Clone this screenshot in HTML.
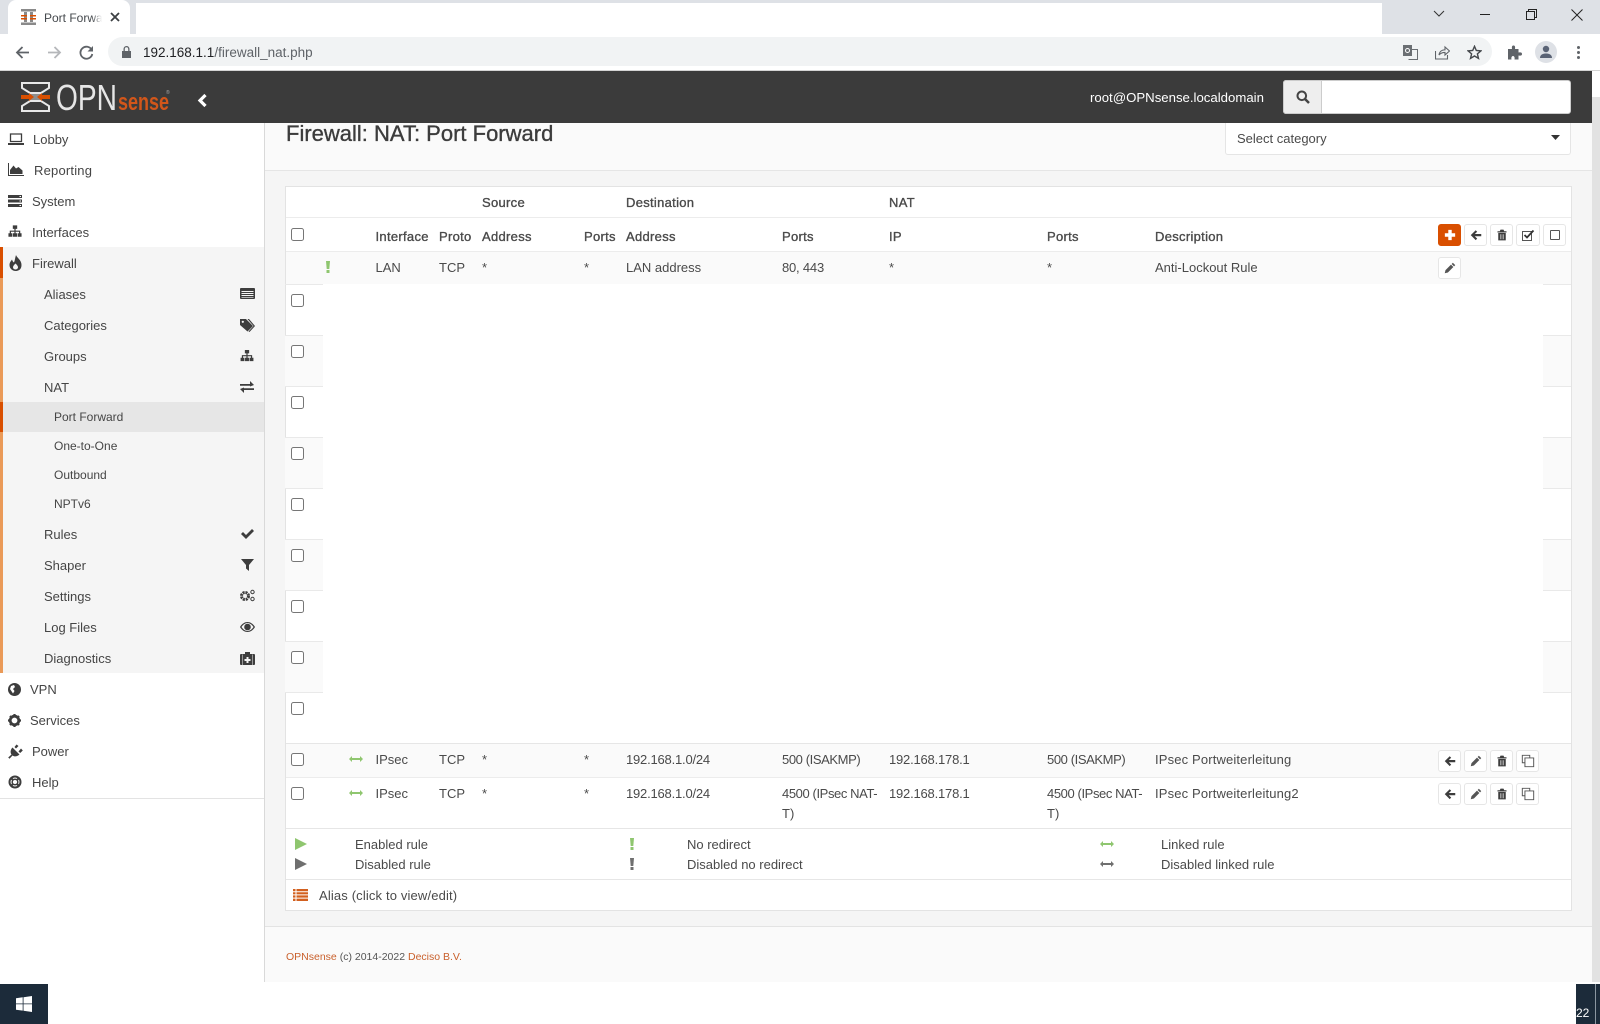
<!DOCTYPE html>
<html><head><meta charset="utf-8"><title>Port Forward</title>
<style>
html,body{margin:0;padding:0;width:1600px;height:1024px;overflow:hidden;background:#fff;font-family:"Liberation Sans",sans-serif;color:#4a4a4a;font-size:13px}
div,span,svg{position:absolute;box-sizing:border-box}
.t{white-space:nowrap;line-height:16px;height:16px;margin-top:1px}
.t span{position:static}
.z{margin-top:0}
.b{-webkit-text-stroke:.35px #4a4a4a;color:#4a4a4a;letter-spacing:.3px}
.s{color:#454545}
.n{letter-spacing:-.4px}
.m{letter-spacing:-.2px}
.d{letter-spacing:.15px}
.cb{width:13px;height:13px;border:1px solid #767676;border-radius:2.5px;background:#fff;left:291px}
.lc{left:285px;width:38px;height:51px;border-top:1px solid #e9e9e9}
.rc{left:1543px;width:28px;height:51px;border-top:1px solid #e9e9e9}
.g{background:#fafafa}
.btn{width:23px;height:22px;border:1px solid #e6e6e6;border-radius:3px;background:#fff}
.btn svg{left:5px;top:4px;width:12px;height:12px;fill:#3d3d3d}
.btn svg.w{left:4px;top:3px;width:14px;height:14px}
.ic{fill:#3d3d3d}
.bar{left:0;width:3px}
</style></head><body>
<svg width="0" height="0" style="display:none"><defs>
<symbol id="arr" viewBox="0 0 16 16"><path d="M7.600 1.600 9.600 3.600 6.400 6.700H15V9.700H6.400L9.600 12.800 7.600 14.800 1 8.200Z"/></symbol>
<symbol id="pen" viewBox="0 0 16 16"><path fill="#555" d="M11.800 1 15 4.200 13.400 5.800 10.200 2.600ZM9.300 3.500 12.500 6.700 5.200 14 1 15 2 10.800Z"/></symbol>
<symbol id="tr" viewBox="0 0 16 16"><path d="M6 .8H10L11 3H14V4.600H2V3H5ZM3 5.400H13V15.200H3Z"/><path fill="#aaa" d="M5.400 7H6.600V13.600H5.400ZM7.400 7H8.600V13.600H7.400ZM9.400 7H10.600V13.600H9.400Z"/></symbol>
<symbol id="cln" viewBox="0 0 16 16"><path fill="none" stroke="#555" stroke-width="1.100" d="M10 4V1.500H1.500V10H4M4.500 4.500H14.500V14.500H4.500Z"/></symbol>
<symbol id="site" viewBox="0 0 16 14"><path d="M5.500 0H10.500V4H8.700V6H14V9H15.500V13H11V9H12.600V7.300H8.700V9H10.300V13H5.700V9H7.300V7.300H3.400V9H5V13H.5V9H2V6H7.300V4H5.500Z"/></symbol>
<symbol id="link" viewBox="0 0 14 8"><path d="M0 4 3 1V3H11V1L14 4 11 7V5H3V7Z"/></symbol>
</defs></svg>

<!-- browser chrome -->
<div style="left:0;top:0;width:1600px;height:34px;background:#dee1e6"></div>
<div style="left:136px;top:3px;width:1246px;height:31px;background:#fff"></div>
<div style="left:8px;top:0;width:122px;height:34px;background:#fff;border-radius:8px 8px 0 0"></div>
<svg style="left:21px;top:9px" width="15" height="16" viewBox="0 0 15 16"><path fill="#8a8a8a" d="M0 0H15V2.500H0ZM0 13.500H15V16H0ZM3 3H6V13H3ZM9 3H12V13H9Z"/><path fill="#d94f00" d="M0 6H6V7.500H0ZM9 6H15V7.500H9ZM0 9H6V10.500H0ZM9 9H15V10.500H9Z"/></svg>
<div class="t" style="left:44px;top:9px;font-size:12px;color:#45494d;width:58px;overflow:hidden">Port Forwa</div>
<div style="left:92px;top:6px;width:10px;height:24px;background:linear-gradient(90deg,rgba(255,255,255,0),#fff)"></div>
<svg style="left:110px;top:12px" width="10" height="10" viewBox="0 0 10 10"><path stroke="#3c4043" stroke-width="1.800" d="M1 1 9 9M9 1 1 9"/></svg>
<svg style="left:1432px;top:9px" width="14" height="10" viewBox="0 0 14 10"><path fill="none" stroke="#333" d="M2 2 7 7 12 2"/></svg>
<div style="left:1480px;top:14px;width:10px;height:1px;background:#222"></div>
<svg style="left:1526px;top:9px" width="11" height="11" viewBox="0 0 11 11"><path fill="none" stroke="#222" d="M.5 2.500H8.500V10.500H.5ZM2.500 2.500V.5H10.500V8.500H8.500"/></svg>
<svg style="left:1571px;top:9px" width="12" height="12" viewBox="0 0 12 12"><path stroke="#222" d="M.5.5 11.500 11.500M11.500.5.5 11.500"/></svg>

<div style="left:0;top:34px;width:1600px;height:37px;background:#fff;border-bottom:1px solid #d4d4d4"></div>
<svg style="left:15px;top:45px" width="15" height="15" viewBox="0 0 15 15"><path fill="none" stroke="#5f6368" stroke-width="1.800" d="M14 7.500H2M7.500 2 2 7.500 7.500 13"/></svg>
<svg style="left:47px;top:45px" width="15" height="15" viewBox="0 0 15 15"><path fill="none" stroke="#b5b7ba" stroke-width="1.800" d="M1 7.500H13M7.500 2 13 7.500 7.500 13"/></svg>
<svg style="left:79px;top:45px" width="15" height="15" viewBox="0 0 15 15"><path fill="none" stroke="#5f6368" stroke-width="1.800" d="M12.800 5A6 6 0 1 0 13.300 9"/><path fill="#5f6368" d="M14 1V6.500H8.500Z"/></svg>
<div style="left:108px;top:37px;width:1384px;height:29px;background:#f1f3f4;border-radius:15px"></div>
<svg style="left:122px;top:46px" width="9" height="12" viewBox="0 0 9 12"><path fill="#5f6368" d="M0 5H9V12H0ZM1.500 5V3A3 3 0 0 1 7.500 3V5H6.200V3A1.700 1.700 0 0 0 2.800 3V5Z"/></svg>
<div class="t" style="left:143px;top:44px;font-size:13.500px;color:#5f6368"><span style="color:#202124">192.168.1.1</span>/firewall_nat.php</div>
<svg style="left:1403px;top:45px" width="15" height="15" viewBox="0 0 15 15"><path fill="#6b6f73" d="M0 0H9V11H0Z"/><path fill="none" stroke="#6b6f73" d="M6 4.500H14.500V14.500H5.500"/><circle cx="4.500" cy="5.500" r="2" fill="none" stroke="#fff"/></svg>
<svg style="left:1435px;top:45px" width="15" height="15" viewBox="0 0 15 15"><path fill="none" stroke="#5f6368" stroke-width="1.100" d="M.5 6V14H12.500V10M4 10C4.500 6.500 7 4.800 10 4.800V2L14.500 6 10 10V7.400C7.500 7.400 5.500 8 4 10Z"/></svg>
<svg style="left:1467px;top:45px" width="15" height="15" viewBox="0 0 15 15"><path fill="none" stroke="#45484c" stroke-width="1.400" d="M7.500 1.300 9.300 5.500 13.900 5.900 10.400 8.900 11.500 13.400 7.500 11 3.500 13.400 4.600 8.900 1.100 5.900 5.700 5.500Z"/></svg>
<svg style="left:1507px;top:45px" width="15" height="15" viewBox="0 0 15 15"><path fill="#5f6368" d="M1 4H5C4.500 1 5.500 .5 6.500 .5S8.500 1 8 4H11.500V7.500C14.500 7 15 8 15 9S14.500 11 11.500 10.500V14.500H7.500C8 12 7 11 6 11S4 12 4.500 14.500H1Z"/></svg>
<div style="left:1535px;top:41px;width:22px;height:22px;border-radius:50%;background:#dee1e6"></div>
<svg style="left:1539px;top:45px" width="14" height="14" viewBox="0 0 14 14"><circle cx="7" cy="4" r="3.200" fill="#5a6375"/><path fill="#5a6375" d="M1 13C1 9.500 4 8.500 7 8.500S13 9.500 13 13Z"/></svg>
<div style="left:1577px;top:46px;width:3px;height:3px;border-radius:50%;background:#5f6368"></div>
<div style="left:1577px;top:51px;width:3px;height:3px;border-radius:50%;background:#5f6368"></div>
<div style="left:1577px;top:56px;width:3px;height:3px;border-radius:50%;background:#5f6368"></div>

<!-- page backgrounds -->
<div style="left:264px;top:122px;width:1328px;height:860px;background:#f5f5f5"></div>
<div style="left:264px;top:122px;width:1328px;height:49px;background:#fafafa;border-bottom:1px solid #e5e5e5"></div>
<div style="left:264px;top:926px;width:1328px;height:56px;background:#fafafa;border-top:1px solid #e3e3e3"></div>
<div style="left:1592px;top:97px;width:8px;height:885px;background:#e2e2e2"></div>
<div style="left:264px;top:122px;width:1px;height:860px;background:#d9d9d9"></div>

<!-- title (clipped by navbar) -->
<div class="t" style="left:286px;top:121px;height:24px;line-height:24px;font-size:22px;-webkit-text-stroke:.35px #3c3c3c;color:#3c3c3c">Firewall: NAT: Port Forward</div>

<!-- navbar -->
<div style="left:0;top:71px;width:1592px;height:52px;background:#3b3b3b"></div>
<svg style="left:21px;top:82px" width="150" height="30" viewBox="0 0 150 30">
<path fill="none" stroke="#e8e8e8" stroke-width="2" d="M1 1H28V6L20 11H9L1 6ZM1 29H28V24L20 19H9L1 24Z"/>
<path fill="#8d8d8d" d="M9 12H20V18H9Z"/>
<path fill="#d94f00" d="M0 13H8V11L13 15 8 19V17H0ZM29 13H21V11L16 15 21 19V17H29Z"/>
<text x="35" y="28" font-size="36" fill="#e6e6e6" font-family="Liberation Sans" textLength="61" lengthAdjust="spacingAndGlyphs">OPN</text>
<text x="97" y="28" font-size="24" font-weight="700" fill="#d2561a" font-family="Liberation Sans" textLength="51" lengthAdjust="spacingAndGlyphs">sense</text>
<text x="145" y="12" font-size="5" fill="#aaa" font-family="Liberation Sans">®</text>
</svg>
<svg style="left:197px;top:93px" width="11" height="15" viewBox="0 0 11 15"><path fill="none" stroke="#fff" stroke-width="3.200" d="M8.500 2 3 7.500 8.500 13"/></svg>
<div class="t z" style="left:1090px;top:90px;color:#fff;font-size:13.200px">root@OPNsense.localdomain</div>
<div style="left:1283px;top:80px;width:288px;height:34px;background:#fff;border:1px solid #ccc;border-radius:3px"></div>
<div style="left:1283px;top:80px;width:39px;height:34px;background:#eee;border:1px solid #ccc;border-radius:3px 0 0 3px"></div>
<svg style="left:1296px;top:90px" width="14" height="14" viewBox="0 0 14 14"><circle cx="5.800" cy="5.800" r="4.300" fill="none" stroke="#444" stroke-width="2"/><path stroke="#444" stroke-width="2.500" d="M9 9 13 13"/></svg>

<!-- select -->
<div style="left:1225px;top:123px;width:346px;height:32px;background:#fff;border:1px solid #e5e5e5;border-top:0;border-radius:0 0 3px 3px"></div>
<div class="t" style="left:1237px;top:130px">Select category</div>
<svg style="left:1551px;top:135px" width="9" height="5" viewBox="0 0 9 5"><path fill="#333" d="M0 0H9L4.500 5Z"/></svg>

<!-- sidebar -->
<div style="left:0;top:247px;width:264px;height:426px;background:#f5f5f5"></div>
<div style="left:0;top:402px;width:264px;height:30px;background:#e6e6e6"></div>
<div class="bar" style="top:247px;height:426px;background:#ea9a58"></div>
<div class="bar" style="top:247px;height:31px;background:#d94f00"></div>
<div class="bar" style="top:402px;height:30px;background:#d94f00"></div>
<div style="left:0;top:798px;width:264px;height:1px;background:#e3e3e3"></div>

<svg style="left:8px;top:133px" width="16" height="12" viewBox="0 0 16 12"><path fill="none" stroke="#3d3d3d" stroke-width="1.300" d="M2.500 1H13.500V8.500H2.500Z"/><path fill="#3d3d3d" d="M0 10H16V12H0Z"/></svg>
<div class="t s" style="left:33px;top:131px">Lobby</div>
<svg style="left:8px;top:163px" width="16" height="13" viewBox="0 0 16 13"><path fill="#3d3d3d" d="M0 0H1V12H16V13H0ZM2 11V7L5.500 2.500 8 5.500 10.500 4 14.500 7.500V11Z"/></svg>
<div class="t s" style="left:34px;top:162px;letter-spacing:.2px">Reporting</div>
<svg style="left:8px;top:195px" width="14" height="12" viewBox="0 0 14 12"><path fill="#3d3d3d" d="M0 0H14V3H0ZM0 4.500H14V7.500H0ZM0 9H14V12H0Z"/><path fill="#fff" d="M11.500 1H13V2H11.500ZM11.500 5.500H13V6.500H11.500ZM11.500 10H13V11H11.500Z"/></svg>
<div class="t s" style="left:32px;top:193px">System</div>
<svg class="ic" style="left:8px;top:225px" width="14" height="13"><use href="#site"/></svg>
<div class="t s" style="left:32px;top:224px">Interfaces</div>
<svg style="left:9px;top:255px" width="13" height="16" viewBox="0 0 13 16"><path fill="#3d3d3d" d="M7 0C8 3 12.500 5 12.500 10S9 16 6.500 16 .5 14 .5 10C.5 7.500 2 6 3 4.500 3.500 6 4 7 5 7.500 6 5 6 3 7 0ZM6.500 8.500C5 10 4 11 4 12.300S5 14.500 6.500 14.500 9 13.500 9 12.300 8 10 6.500 8.500Z"/></svg>
<div class="t s" style="left:32px;top:255px">Firewall</div>

<div class="t s" style="left:44px;top:286px">Aliases</div>
<svg style="left:240px;top:288px" width="15" height="11" viewBox="0 0 15 11"><path fill="#3d3d3d" d="M1 0H14A1 1 0 0 1 15 1V10A1 1 0 0 1 14 11H1A1 1 0 0 1 0 10V1A1 1 0 0 1 1 0Z"/><path fill="#f5f5f5" d="M1.500 3H13.500V4H1.500ZM1.500 5H13.500V6H1.500ZM1.500 7H13.500V8H1.500ZM1.500 9H13.500V9.600H1.500Z"/></svg>
<div class="t s" style="left:44px;top:317px">Categories</div>
<svg style="left:240px;top:319px" width="15" height="13" viewBox="0 0 15 13"><path fill="#3d3d3d" d="M0 0H6L13 7 7.500 12.500 0 6ZM7.500 0H9L15 7 9.500 13 8.500 12.500 13.500 7Z"/><circle cx="2.800" cy="2.800" r="1.100" fill="#f5f5f5"/></svg>
<div class="t s" style="left:44px;top:348px">Groups</div>
<svg class="ic" style="left:240px;top:350px" width="14" height="12"><use href="#site"/></svg>
<div class="t s" style="left:44px;top:379px">NAT</div>
<svg style="left:240px;top:381px" width="14" height="12" viewBox="0 0 14 12"><path fill="#3d3d3d" d="M0 3H10V0L14 4 10 5.500V4.800H0ZM14 7.200H4V6.500L0 8 4 12V9H14Z"/></svg>
<div class="t s z" style="left:54px;top:409px;font-size:12px">Port Forward</div>
<div class="t s z" style="left:54px;top:438px;font-size:12px">One-to-One</div>
<div class="t s z" style="left:54px;top:467px;font-size:12px">Outbound</div>
<div class="t s" style="left:54px;top:495px;font-size:12px">NPTv6</div>
<div class="t s" style="left:44px;top:526px">Rules</div>
<svg style="left:241px;top:529px" width="13" height="10" viewBox="0 0 13 10"><path fill="#3d3d3d" d="M0 5 2 3 5 6 11 0 13 2 5 10Z"/></svg>
<div class="t s" style="left:44px;top:557px">Shaper</div>
<svg style="left:241px;top:559px" width="13" height="12" viewBox="0 0 13 12"><path fill="#3d3d3d" d="M0 0H13L8 6V12L5 9.500V6Z"/></svg>
<div class="t s" style="left:44px;top:588px">Settings</div>
<svg style="left:240px;top:589px" width="15" height="13" viewBox="0 0 15 13"><circle cx="5" cy="7" r="3.500" fill="none" stroke="#3d3d3d" stroke-width="3" stroke-dasharray="2 .8"/><circle cx="12.500" cy="3" r="1.700" fill="none" stroke="#3d3d3d"/><circle cx="12.500" cy="10" r="1.700" fill="none" stroke="#3d3d3d"/></svg>
<div class="t s" style="left:44px;top:619px">Log Files</div>
<svg style="left:240px;top:622px" width="15" height="10" viewBox="0 0 15 10"><path fill="#3d3d3d" d="M0 5C2 1.500 5 0 7.500 0S13 1.500 15 5C13 8.500 10 10 7.500 10S2 8.500 0 5ZM1.500 5C3 7.500 5.500 9 7.500 9S12 7.500 13.500 5C12 2.500 9.500 1 7.500 1S3 2.500 1.500 5Z"/><circle cx="7.500" cy="5" r="3.300" fill="#3d3d3d"/></svg>
<div class="t s" style="left:44px;top:650px">Diagnostics</div>
<svg style="left:240px;top:652px" width="15" height="13" viewBox="0 0 15 13"><path fill="#3d3d3d" d="M5 0H10V2H14A1 1 0 0 1 15 3V12A1 1 0 0 1 14 13H1A1 1 0 0 1 0 12V3A1 1 0 0 1 1 2H5Z"/><path fill="#f5f5f5" d="M2.500 2.500H3V13H2.500ZM12 2.500H12.500V13H12ZM6.500 5H8.500V7H10.500V9H8.500V11H6.500V9H4.500V7H6.500Z"/></svg>

<svg style="left:8px;top:683px" width="13" height="13" viewBox="0 0 13 13"><circle cx="6.500" cy="6.500" r="6.500" fill="#3d3d3d"/><path fill="#fff" d="M3 3 6 2 7 4 5 6 6.500 8 5 10.500 2 6Z"/></svg>
<div class="t s" style="left:30px;top:681px">VPN</div>
<svg style="left:8px;top:714px" width="13" height="13" viewBox="0 0 13 13"><circle cx="6.500" cy="6.500" r="4.300" fill="none" stroke="#3d3d3d" stroke-width="2.800"/><path stroke="#3d3d3d" stroke-width="2.200" d="M6.500 0V3M6.500 10V13M0 6.500H3M10 6.500H13M2 2 4 4M9 9 11 11M11 2 9 4M4 9 2 11"/></svg>
<div class="t s" style="left:30px;top:712px">Services</div>
<svg style="left:8px;top:744px" width="15" height="15" viewBox="0 0 15 15"><path fill="#3d3d3d" d="M4.500 3.500 11.500 10.500C9.500 12.500 6.500 13 4.500 11.500L1.500 14.800.2 13.500 3.500 10.500C2 8.500 2.500 5.500 4.500 3.500ZM8.500 .5 10.500 2 8 4.500 6.500 3ZM13 4.500 14.800 6.500 12.200 9 10.500 7.500Z"/></svg>
<div class="t s" style="left:32px;top:743px">Power</div>
<svg style="left:8px;top:775px" width="14" height="14" viewBox="0 0 14 14"><circle cx="7" cy="7" r="5.500" fill="none" stroke="#3d3d3d" stroke-width="2"/><circle cx="7" cy="7" r="2.800" fill="none" stroke="#3d3d3d" stroke-width="1.500"/><path stroke="#3d3d3d" stroke-width="2" d="M2.800 2.800 5 5M11.200 2.800 9 5M2.800 11.200 5 9M11.200 11.200 9 9"/></svg>
<div class="t s" style="left:32px;top:774px">Help</div>

<!-- table -->
<div style="left:285px;top:186px;width:1287px;height:725px;background:#fff;border:1px solid #e3e3e3"></div>
<div style="left:286px;top:217px;width:1285px;height:1px;background:#ececec"></div>
<div style="left:286px;top:251px;width:1285px;height:1px;background:#ececec"></div>
<div style="left:286px;top:252px;width:1285px;height:32px;background:#fafafa"></div>

<div class="t b" style="left:482px;top:194px">Source</div>
<div class="t b" style="left:626px;top:194px">Destination</div>
<div class="t b" style="left:889px;top:194px">NAT</div>
<div class="cb" style="top:228px"></div>
<div class="t b" style="left:375.500px;top:228px">Interface</div>
<div class="t b" style="left:439px;top:228px">Proto</div>
<div class="t b" style="left:482px;top:228px">Address</div>
<div class="t b" style="left:584px;top:228px">Ports</div>
<div class="t b" style="left:626px;top:228px">Address</div>
<div class="t b" style="left:782px;top:228px">Ports</div>
<div class="t b" style="left:889px;top:228px">IP</div>
<div class="t b" style="left:1047px;top:228px">Ports</div>
<div class="t b" style="left:1155px;top:228px">Description</div>

<div class="btn" style="left:1438px;top:224px;background:#d94f00;border-color:#d94f00"><svg style="fill:#fff" viewBox="0 0 14 14"><path d="M5 1H9V5H13V9H9V13H5V9H1V5H5Z"/></svg></div>
<div class="btn" style="left:1464px;top:224px"><svg><use href="#arr"/></svg></div>
<div class="btn" style="left:1490px;top:224px"><svg><use href="#tr"/></svg></div>
<div class="btn" style="left:1516px;top:224px;width:24px"><svg class="w" viewBox="0 0 14 14"><path fill="none" stroke="#555" d="M1.500 3.500H10.500V12.500H1.500Z"/><path fill="none" stroke="#333" stroke-width="1.800" d="M3.500 7 6 9.500 12.500 2.500"/></svg></div>
<div class="btn" style="left:1543px;top:224px"><svg class="w" viewBox="0 0 14 14"><path fill="none" stroke="#555" d="M3 2.500H11A.5.5 0 0 1 11.500 3V11A.5.5 0 0 1 11 11.500H3A.5.5 0 0 1 2.500 11V3A.5.5 0 0 1 3 2.500Z"/></svg></div>

<svg style="left:326px;top:261px" width="4" height="12" viewBox="0 0 4 12"><path fill="#8fc66f" d="M0 0H4L3.300 8H.7ZM.5 9H3.500V12H.5Z"/></svg>
<div class="t" style="left:375.500px;top:259px">LAN</div>
<div class="t" style="left:439px;top:259px">TCP</div>
<div class="t" style="left:482px;top:259px">*</div>
<div class="t" style="left:584px;top:259px">*</div>
<div class="t" style="left:626px;top:259px">LAN address</div>
<div class="t m" style="left:782px;top:259px">80, 443</div>
<div class="t" style="left:889px;top:259px">*</div>
<div class="t" style="left:1047px;top:259px">*</div>
<div class="t" style="left:1155px;top:259px">Anti-Lockout Rule</div>
<div class="btn" style="left:1438px;top:257px"><svg><use href="#pen"/></svg></div>

<!-- empty rows -->
<div class="lc" style="top:284px"></div><div class="rc" style="top:284px"></div><div class="cb" style="top:294px"></div>
<div class="lc g" style="top:335px"></div><div class="rc g" style="top:335px"></div><div class="cb" style="top:345px"></div>
<div class="lc" style="top:386px"></div><div class="rc" style="top:386px"></div><div class="cb" style="top:396px"></div>
<div class="lc g" style="top:437px"></div><div class="rc g" style="top:437px"></div><div class="cb" style="top:447px"></div>
<div class="lc" style="top:488px"></div><div class="rc" style="top:488px"></div><div class="cb" style="top:498px"></div>
<div class="lc g" style="top:539px"></div><div class="rc g" style="top:539px"></div><div class="cb" style="top:549px"></div>
<div class="lc" style="top:590px"></div><div class="rc" style="top:590px"></div><div class="cb" style="top:600px"></div>
<div class="lc g" style="top:641px"></div><div class="rc g" style="top:641px"></div><div class="cb" style="top:651px"></div>
<div class="lc" style="top:692px"></div><div class="rc" style="top:692px"></div><div class="cb" style="top:702px"></div>

<!-- ipsec rows -->
<div style="left:286px;top:743px;width:1285px;height:34px;background:#fafafa;border-top:1px solid #e6e6e6"></div>
<div style="left:286px;top:777px;width:1285px;height:1px;background:#ececec"></div>
<div style="left:286px;top:828px;width:1285px;height:1px;background:#e6e6e6"></div>
<div style="left:286px;top:879px;width:1285px;height:1px;background:#e6e6e6"></div>

<div class="cb" style="top:753px"></div>
<svg style="left:349px;top:755px;fill:#8fc66f" width="14" height="8"><use href="#link"/></svg>
<div class="t" style="left:375.500px;top:751px">IPsec</div>
<div class="t" style="left:439px;top:751px">TCP</div>
<div class="t" style="left:482px;top:751px">*</div>
<div class="t" style="left:584px;top:751px">*</div>
<div class="t m" style="left:626px;top:751px">192.168.1.0/24</div>
<div class="t n" style="left:782px;top:751px">500 (ISAKMP)</div>
<div class="t m" style="left:889px;top:751px">192.168.178.1</div>
<div class="t n" style="left:1047px;top:751px">500 (ISAKMP)</div>
<div class="t d" style="left:1155px;top:751px">IPsec Portweiterleitung</div>
<div class="btn" style="left:1438px;top:750px"><svg><use href="#arr"/></svg></div>
<div class="btn" style="left:1464px;top:750px"><svg><use href="#pen"/></svg></div>
<div class="btn" style="left:1490px;top:750px"><svg><use href="#tr"/></svg></div>
<div class="btn" style="left:1516px;top:750px"><svg class="w"><use href="#cln"/></svg></div>

<div class="cb" style="top:787px"></div>
<svg style="left:349px;top:789px;fill:#8fc66f" width="14" height="8"><use href="#link"/></svg>
<div class="t" style="left:375.500px;top:785px">IPsec</div>
<div class="t" style="left:439px;top:785px">TCP</div>
<div class="t" style="left:482px;top:785px">*</div>
<div class="t" style="left:584px;top:785px">*</div>
<div class="t m" style="left:626px;top:785px">192.168.1.0/24</div>
<div class="t n" style="left:782px;top:785px">4500 (IPsec NAT-</div>
<div class="t" style="left:782px;top:805px">T)</div>
<div class="t m" style="left:889px;top:785px">192.168.178.1</div>
<div class="t n" style="left:1047px;top:785px">4500 (IPsec NAT-</div>
<div class="t" style="left:1047px;top:805px">T)</div>
<div class="t d" style="left:1155px;top:785px">IPsec Portweiterleitung2</div>
<div class="btn" style="left:1438px;top:783px"><svg><use href="#arr"/></svg></div>
<div class="btn" style="left:1464px;top:783px"><svg><use href="#pen"/></svg></div>
<div class="btn" style="left:1490px;top:783px"><svg><use href="#tr"/></svg></div>
<div class="btn" style="left:1516px;top:783px"><svg class="w"><use href="#cln"/></svg></div>

<!-- legend -->
<svg style="left:295px;top:838px" width="12" height="12" viewBox="0 0 12 12"><path fill="#8fc66f" d="M0 0 12 6 0 12Z"/></svg>
<div class="t" style="left:355px;top:836px">Enabled rule</div>
<svg style="left:295px;top:858px" width="12" height="12" viewBox="0 0 12 12"><path fill="#6f6f6f" d="M0 0 12 6 0 12Z"/></svg>
<div class="t" style="left:355px;top:856px">Disabled rule</div>
<svg style="left:630px;top:838px" width="4" height="12" viewBox="0 0 4 12"><path fill="#8fc66f" d="M0 0H4L3.300 8H.7ZM.5 9H3.500V12H.5Z"/></svg>
<div class="t" style="left:687px;top:836px">No redirect</div>
<svg style="left:630px;top:858px" width="4" height="12" viewBox="0 0 4 12"><path fill="#6f6f6f" d="M0 0H4L3.300 8H.7ZM.5 9H3.500V12H.5Z"/></svg>
<div class="t" style="left:687px;top:856px">Disabled no redirect</div>
<svg style="left:1100px;top:840px;fill:#8fc66f" width="14" height="8"><use href="#link"/></svg>
<div class="t" style="left:1161px;top:836px">Linked rule</div>
<svg style="left:1100px;top:860px;fill:#6f6f6f" width="14" height="8"><use href="#link"/></svg>
<div class="t" style="left:1161px;top:856px">Disabled linked rule</div>
<svg style="left:293px;top:889px" width="15" height="12" viewBox="0 0 15 12"><path fill="#d2601f" d="M0 0H2.500V2.200H0ZM3.500 0H15V2.200H3.500ZM0 3.200H2.500V5.400H0ZM3.500 3.200H15V5.400H3.500ZM0 6.400H2.500V8.600H0ZM3.500 6.400H15V8.600H3.500ZM0 9.600H2.500V12H0ZM3.500 9.600H15V12H3.500Z"/></svg>
<div class="t z d" style="left:319px;top:888px">Alias (click to view/edit)</div>

<!-- footer -->
<div class="t" style="left:286px;top:948px;font-size:10.500px;color:#555"><span style="color:#c9602c">OPNsense</span> (c) 2014-2022 <span style="color:#c9602c">Deciso B.V.</span></div>

<!-- taskbar -->
<div style="left:0;top:984px;width:48px;height:40px;background:#1c2b3a"></div>
<svg style="left:16px;top:996px" width="16" height="16" viewBox="0 0 16 16"><path fill="#fff" d="M0 2.300 6.700 1.300V7.500H0ZM7.500 1.200 16 0V7.500H7.500ZM0 8.300H6.700V14.600L0 13.700ZM7.500 8.300H16V16L7.500 14.800Z"/></svg>
<div style="left:1576px;top:984px;width:24px;height:40px;background:#1c2b3a"></div>
<div style="left:1595px;top:984px;width:1px;height:40px;background:#8b96a0"></div>
<div class="t" style="left:1576px;top:1004px;color:#fff;font-size:12px">22</div>
</body></html>
